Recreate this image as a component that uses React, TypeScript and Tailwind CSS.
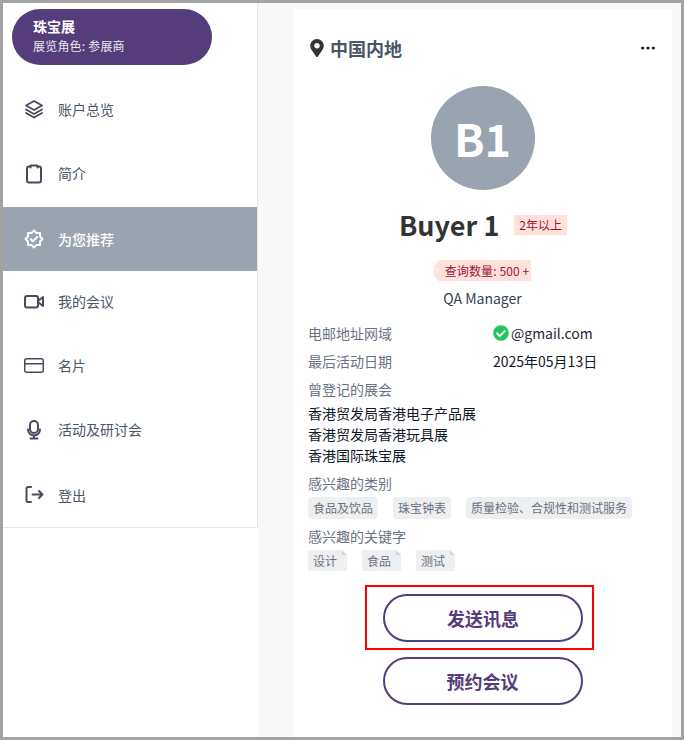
import { FaCheckCircle, FaMapMarkerAlt } from 'react-icons/fa';

const FONT = { fontFamily: '"Noto Sans CJK SC", "Noto Sans", sans-serif' };

function Stroke({ children, width = 2 }: { children: React.ReactNode; width?: number }) {
  return (
    <svg width="24" height="24" viewBox="0 0 24 24" fill="none" stroke="currentColor" strokeWidth={width} strokeLinecap="round" strokeLinejoin="round">
      {children}
    </svg>
  );
}

function LayersIcon() {
  return (
    <Stroke width={1.8}>
      <path d="M12 4l8 4.500-8 4.500-8-4.500z" />
      <path d="M4 12.500l8 4.500 8-4.500M4 16l8 4.500 8-4.500" />
    </Stroke>
  );
}

function ClipboardIcon() {
  return (
    <Stroke>
      <path d="M8.500 5.500H7a2 2 0 0 0-2 2v12a2 2 0 0 0 2 2h10a2 2 0 0 0 2-2v-12a2 2 0 0 0-2-2h-1.500" />
      <path d="M8.500 6.500v-1.500a0.500 0.500 0 0 1 .5-.5h6a0.500 0.500 0 0 1 .5.500v1.500" />
    </Stroke>
  );
}

function BadgeIcon() {
  return (
    <Stroke width={2}>
      <path d="M20.500 12L18 14.500V18H14.500L12 20.500 9.500 18H6V14.500L3.500 12 6 9.500V6H9.500L12 3.500 14.500 6H18V9.500z" />
      <path d="M8.800 12.200l2.200 2.200 4.200-4.400" />
    </Stroke>
  );
}

function VideoIcon() {
  return (
    <Stroke>
      <rect x="3" y="7" width="13" height="11.500" rx="2" />
      <path d="M16.500 11.500l4.500-3.500v9l-4.500-3.500" />
    </Stroke>
  );
}

function CardIcon() {
  return (
    <Stroke width={1.5}>
      <rect x="2.750" y="5.750" width="18.500" height="13.500" rx="2" />
      <path d="M2.750 10.700h18.500" />
    </Stroke>
  );
}

function MicIcon() {
  return (
    <Stroke>
      <rect x="8" y="4" width="8" height="12" rx="4" />
      <path d="M6 12.500a6 6 0 0 0 12 0M12 18.500v3M8.500 21.500h7" />
    </Stroke>
  );
}

function ExitIcon() {
  return (
    <Stroke>
      <path d="M9 4H6a1.500 1.500 0 0 0-1.500 1.500v12A1.500 1.500 0 0 0 6 19h3" />
      <path d="M10.500 11.500H20.500M17 8l3.500 3.500L17 15" />
    </Stroke>
  );
}

function DotsIcon() {
  return (
    <svg width="14" height="4" viewBox="0 0 14 4" fill="currentColor">
      <circle cx="1.700" cy="2" r="1.600" />
      <circle cx="7" cy="2" r="1.600" />
      <circle cx="12.300" cy="2" r="1.600" />
    </svg>
  );
}

const menu = [
  { label: '账户总览', icon: <LayersIcon />, row: 'h-16 pb-[2px]' },
  { label: '简介', icon: <ClipboardIcon />, row: 'h-[65px] pb-[4px]' },
  { label: '为您推荐', icon: <BadgeIcon />, row: 'h-16', active: true },
  { label: '我的会议', icon: <VideoIcon />, row: 'h-16 pb-[4px]' },
  { label: '名片', icon: <CardIcon />, row: 'h-16 pb-[4px]' },
  { label: '活动及研讨会', icon: <MicIcon />, row: 'h-16 pb-[4px]' },
  { label: '登出', icon: <ExitIcon />, row: 'h-16' },
];

function Sidebar() {
  return (
    <aside className="w-[255px] shrink-0 bg-white">
      <div className="border-r border-gray-200 pt-1.5">
        <div className="ml-[9px] flex h-14 w-[200px] flex-col justify-center rounded-full bg-[#553c7b] pb-[2px] pl-[21px] text-white">
          <div className="text-sm leading-[20px] font-bold">珠宝展</div>
          <div className="text-xs leading-[20px] tracking-[0.2px] text-gray-200">展览角色: 参展商</div>
        </div>
        <nav className="mt-[13px] border-b border-gray-200">
          {menu.map((item) => (
            <div
              key={item.label}
              className={`flex items-center gap-3 pl-[19px] text-sm ${item.row} ${
                item.active ? 'bg-[#9aa3b0] font-medium text-white' : 'text-gray-600'
              }`}
            >
              <span className={`flex w-6 shrink-0 justify-center ${item.active ? 'text-white' : 'text-[#464c5c]'}`}>{item.icon}</span>
              <span>{item.label}</span>
            </div>
          ))}
        </nav>
      </div>
    </aside>
  );
}

function Chip({ children }: { children: React.ReactNode }) {
  return <span className="rounded bg-[#eeeff1] px-[5px] py-[2px] text-xs leading-[18px] text-gray-500">{children}</span>;
}

function Keyword({ children }: { children: React.ReactNode }) {
  return (
    <span className="relative w-[39px] bg-[#eeeff1] pl-[5px] text-xs leading-[21px] text-gray-500">
      {children}
      <span className="absolute top-0 right-0 h-[5px] w-[5px] bg-white" />
      <span className="absolute top-0 right-0 h-[5px] w-[5px] bg-gray-300 [clip-path:polygon(0_0,100%_100%,0_100%)]" />
    </span>
  );
}

function Label({ children }: { children: React.ReactNode }) {
  return <div className="text-sm leading-7 text-gray-500">{children}</div>;
}

function OutlineButton({ children }: { children: React.ReactNode }) {
  return (
    <button className="h-12 w-[200px] rounded-full border-2 border-[#553c7b] text-lg font-semibold text-[#553c7b]">
      {children}
    </button>
  );
}

function BuyerCard() {
  return (
    <section className="h-full w-[379px] bg-white px-4">
      <div className="flex items-center justify-between pt-[27px]">
        <div className="ml-[-1px] flex items-center gap-1 text-gray-600">
          <FaMapMarkerAlt size={18} className="text-[#333]" />
          <span className="text-lg leading-6 font-semibold">中国内地</span>
        </div>
        <span className="mr-[1px] text-gray-900"><DotsIcon /></span>
      </div>

      <div className="mt-[26px] flex flex-col items-center">
        <div className="flex h-[104px] w-[104px] items-center justify-center rounded-full bg-[#9aa3b0] text-[45px] font-semibold text-white">
          B1
        </div>
        <div className="mt-[15px] ml-[1px] flex h-10 items-center gap-[15px]">
          <h1 className="text-[27px] leading-10 font-semibold text-[#333]">Buyer 1</h1>
          <span className="bg-[#fee2d9] px-[5px] text-xs leading-5 text-[#9f1239]">2年以上</span>
        </div>
        <div className="relative mt-[15px] bg-[#fee2d9] pr-[2px] pl-[11px] text-xs leading-[21px] tracking-[0.1px] text-[#9f1239] [clip-path:polygon(5px_0,100%_0,100%_100%,5px_100%,0_70%,0_30%)]">
          查询数量: 500 +
          <span className="absolute top-[9px] left-[2px] h-[2px] w-[2px] rounded-full bg-white" />
        </div>
        <div className="mt-[7px] text-sm leading-5 text-gray-700">QA Manager</div>
      </div>

      <div className="mt-[11px] ml-[-1px]">
        <div className="flex items-center">
          <div className="w-[185px]"><Label>电邮地址网域</Label></div>
          <div className="flex items-center gap-[2px] text-sm text-gray-800">
            <FaCheckCircle size={16} className="text-[#22c55e]" />
            @gmail.com
          </div>
        </div>
        <div className="flex items-center">
          <div className="w-[185px]"><Label>最后活动日期</Label></div>
          <div className="text-sm text-gray-900">2025年05月13日</div>
        </div>
        <Label>曾登记的展会</Label>
        <div className="text-sm leading-[21px] text-gray-900">
          <div>香港贸发局香港电子产品展</div>
          <div>香港贸发局香港玩具展</div>
          <div>香港国际珠宝展</div>
        </div>
        <div className="mt-[3px]"><Label>感兴趣的类别</Label></div>
        <div className="flex gap-[15px]">
          <Chip>食品及饮品</Chip>
          <Chip>珠宝钟表</Chip>
          <Chip>质量检验、合规性和测试服务</Chip>
        </div>
        <div className="mt-[3px]"><Label>感兴趣的关键字</Label></div>
        <div className="flex gap-[15px]">
          <Keyword>设计</Keyword>
          <Keyword>食品</Keyword>
          <Keyword>测试</Keyword>
        </div>
      </div>

      <div className="mt-[14px] flex flex-col items-center gap-[7px]">
        <div className="mr-[6px] flex h-[65px] w-[229px] items-center border-2 border-[#f00] pl-4">
          <OutlineButton>发送讯息</OutlineButton>
        </div>
        <OutlineButton>预约会议</OutlineButton>
      </div>
    </section>
  );
}

export default function App() {
  return (
    <div className="h-[740px] w-[684px] overflow-hidden border-[3px] border-[#a3a3a3] bg-[#f8f8f8]" style={FONT}>
      <div className="flex h-full">
        <Sidebar />
        <main className="flex-1 pt-1.5 pl-[35px]">
          <BuyerCard />
        </main>
      </div>
    </div>
  );
}
